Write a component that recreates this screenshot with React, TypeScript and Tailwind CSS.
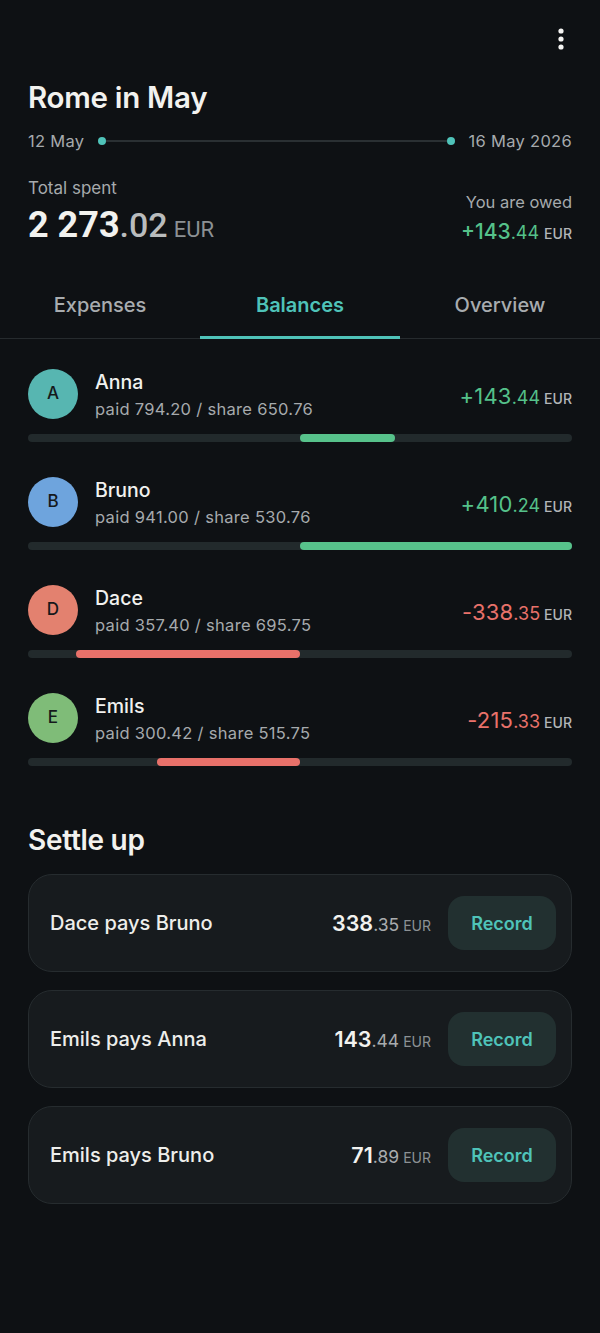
import React from "react";

const NUM = { fontFamily: "Roboto, 'Noto Sans', sans-serif" } as const;

type Person = {
  initial: string;
  name: string;
  paid: string;
  share: string;
  sign: "+" | "-";
  whole: string;
  frac: string;
  value: number;
  avatar: string;
};

const people: Person[] = [
  { initial: "A", name: "Anna", paid: "794.20", share: "650.76", sign: "+", whole: "143", frac: ".44", value: 143.44, avatar: "bg-[#57b6b1]" },
  { initial: "B", name: "Bruno", paid: "941.00", share: "530.76", sign: "+", whole: "410", frac: ".24", value: 410.24, avatar: "bg-[#6ea4dd]" },
  { initial: "D", name: "Dace", paid: "357.40", share: "695.75", sign: "-", whole: "338", frac: ".35", value: -338.35, avatar: "bg-[#e3816f]" },
  { initial: "E", name: "Emils", paid: "300.42", share: "515.75", sign: "-", whole: "215", frac: ".33", value: -215.33, avatar: "bg-[#7fbc78]" },
];

const settles = [
  { text: "Dace pays Bruno", whole: "338", frac: ".35" },
  { text: "Emils pays Anna", whole: "143", frac: ".44" },
  { text: "Emils pays Bruno", whole: "71", frac: ".89" },
];

const MAX = 410.24;
const HALF = 272;

function BalanceRow({ p }: { p: Person }) {
  const w = (Math.abs(p.value) / MAX) * HALF;
  const pos = p.value > 0;
  return (
    <div className="flex flex-col">
      <div className="flex items-center">
        <div className={`w-[50px] h-[50px] rounded-full ${p.avatar} flex items-center justify-center text-[#15191b] text-[17px] font-medium`}>
          {p.initial}
        </div>
        <div className="ml-[17px] flex flex-col">
          <div className="mt-[1px] text-[19.5px] leading-[24px] font-medium text-[#f1f1ef]">{p.name}</div>
          <div className="mt-[5px] text-[16.5px] leading-[20px] tracking-[0.3px] text-[#a6aaad]">
            paid {p.paid} / share {p.share}
          </div>
        </div>
        <div className="ml-auto flex items-baseline mt-[4px]">
          <span className={`text-[22px] tracking-[0.2px] ${pos ? "text-[#55c18a]" : "text-[#e8716a]"}`}>
            {p.sign}
            {p.whole}
          </span>
          <span className={`text-[18px] ${pos ? "text-[#55c18a]" : "text-[#e8716a]"}`}>{p.frac}</span>
          <span className="ml-[4px] text-[14px] text-[#b3b6b8] font-medium">EUR</span>
        </div>
      </div>
      <div className="mt-[15px] h-[8px] rounded-full bg-[#222a2c] flex">
        <div className="w-1/2 flex justify-end">
          {!pos && <div className="h-full rounded-full bg-[#e8716a]" style={{ width: w }} />}
        </div>
        <div className="w-1/2 flex justify-start">
          {pos && <div className="h-full rounded-full bg-[#57c28b]" style={{ width: w }} />}
        </div>
      </div>
    </div>
  );
}

export default function App() {
  return (
    <div className="w-[600px] min-h-[1333px] bg-[#0e1114] text-[#f1f1ef]" style={{ fontFamily: "Inter, 'Noto Sans', sans-serif" }}>
      <div className="px-7 pt-[27px]">
        <div className="flex justify-end h-6">
          <svg width="24" height="24" viewBox="0 0 24 24" className="mr-[-1px]">
            <circle cx="12" cy="4" r="2.6" fill="#f4f4f2" />
            <circle cx="12" cy="12" r="2.6" fill="#f4f4f2" />
            <circle cx="12" cy="20" r="2.6" fill="#f4f4f2" />
          </svg>
        </div>
        <h1 className="mt-[29px] text-[29.5px] leading-[34px] font-semibold tracking-[-0.3px] text-[#f2f2ef]">Rome in May</h1>
        <div className="mt-[17px] h-5 flex items-center text-[16.5px] tracking-[0.3px] text-[#a6aaad]">
          <span>12 May</span>
          <div className="flex-1 flex items-center mx-[14px]">
            <div className="w-[8px] h-[8px] rounded-full bg-[#4fc3b9]" />
            <div className="flex-1 h-[2px] bg-[#2a3033]" />
            <div className="w-[8px] h-[8px] rounded-full bg-[#4fc3b9]" />
          </div>
          <span>16 May 2026</span>
        </div>
        <div className="mt-[27px] flex items-end justify-between">
          <div className="flex flex-col">
            <div className="text-[17px] leading-[20px] text-[#a6aaad]">Total spent</div>
            <div className="mt-[7px] flex items-baseline leading-[40px]" style={NUM}>
              <span className="text-[36px] font-bold text-[#f2f2ef]">2 273</span>
              <span className="text-[34px] font-medium text-[#b9bcbd]">.02</span>
              <span className="ml-[6px] text-[22px] text-[#8c9194]">EUR</span>
            </div>
          </div>
          <div className="flex flex-col items-end mb-[4px]">
            <div className="text-[16.5px] leading-[20px] text-[#a6aaad]">You are owed</div>
            <div className="mt-[8px] flex items-baseline leading-[24px]">
              <span className="text-[21px] font-medium text-[#55c18a]">+143</span>
              <span className="text-[18px] text-[#55c18a]">.44</span>
              <span className="ml-[5px] text-[14px] font-medium text-[#b3b6b8]">EUR</span>
            </div>
          </div>
        </div>
      </div>

      <div className="mt-[21px] h-[68px] flex border-b border-[#262b2e]">
        <div className="w-1/3 flex items-center justify-center text-[20px] font-medium text-[#a8acaf]">Expenses</div>
        <div className="w-1/3 relative flex items-center justify-center text-[20px] font-semibold text-[#4fc3b9]">
          Balances
          <div className="absolute left-0 right-0 bottom-[-1px] h-[3px] bg-[#4fc3b9]" />
        </div>
        <div className="w-1/3 flex items-center justify-center text-[20px] font-medium text-[#a8acaf]">Overview</div>
      </div>

      <div className="px-7 pt-[30px] flex flex-col gap-[35px]">
        {people.map((p) => (
          <BalanceRow key={p.name} p={p} />
        ))}
      </div>

      <div className="px-7">
        <h2 className="mt-[58px] text-[28px] leading-[32px] font-semibold tracking-[-0.3px] text-[#f2f2ef]">Settle up</h2>
        <div className="mt-[18px] flex flex-col gap-[18px]">
          {settles.map((s) => (
            <div key={s.text} className="h-[98px] rounded-[24px] bg-[#171b1e] border border-[#262c2f] flex items-center pl-[21px] pr-[15px]">
              <span className="text-[20px] font-medium text-[#eeeeeb]">{s.text}</span>
              <div className="ml-auto flex items-baseline">
                <span className="text-[21.5px] font-semibold text-[#f2f2ef]">{s.whole}</span>
                <span className="text-[17.5px] text-[#a9acae]">{s.frac}</span>
                <span className="ml-[4px] text-[14px] text-[#8c9194]">EUR</span>
              </div>
              <button className="ml-[17px] w-[108px] h-[54px] rounded-[16px] bg-[#223030] text-[#4fc3b9] text-[18px] font-semibold">
                Record
              </button>
            </div>
          ))}
        </div>
      </div>
    </div>
  );
}
